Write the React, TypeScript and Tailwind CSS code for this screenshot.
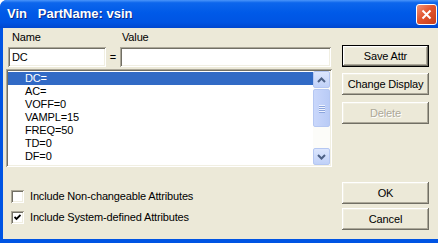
import React from 'react';

const items = ['DC=', 'AC=', 'VOFF=0', 'VAMPL=15', 'FREQ=50', 'TD=0', 'DF=0'];

const sunken =
  'shadow-[inset_1px_1px_0_#aca899,inset_-1px_-1px_0_#ffffff,inset_2px_2px_0_#716f64,inset_-2px_-2px_0_#f1efe2]';
const raised =
  'shadow-[inset_-1px_-1px_0_#716f64,inset_1px_1px_0_#ffffff,inset_-2px_-2px_0_#aca899,inset_2px_2px_0_#f1efe2]';

const Button = ({ label, isDefault, disabled }: { label: string; isDefault?: boolean; disabled?: boolean }) => (
  <div
    className={`h-[22px] w-[87px] flex items-center justify-center bg-[#ece9d8] ${
      isDefault ? 'border border-black' : ''
    }`}
  >
    <div className={`w-full h-full flex items-center justify-center ${raised}`}>
      <span
        className={
          disabled ? 'text-[#aca899] [text-shadow:1px_1px_0_#ffffff]' : 'text-black'
        }
      >
        {label}
      </span>
    </div>
  </div>
);

const Chevron = ({ up }: { up?: boolean }) => (
  <svg width="9" height="6" viewBox="0 0 9 6">
    <path
      d={up ? 'M1 5 L4.5 1.5 L8 5' : 'M1 1 L4.5 4.5 L8 1'}
      fill="none"
      stroke="#4d6185"
      strokeWidth="2"
    />
  </svg>
);

const ScrollBtn = ({ up }: { up?: boolean }) => (
  <div className="h-[17px] w-[17px] flex items-center justify-center rounded-[2px] border border-[#b5c7f2] bg-[linear-gradient(to_bottom,#dce6fd,#c0d1f8)]">
    <Chevron up={up} />
  </div>
);

const Checkbox = ({ checked }: { checked?: boolean }) => (
  <div className={`w-[13px] h-[13px] bg-white flex items-center justify-center ${sunken}`}>
    {checked && (
      <svg width="7" height="7" viewBox="0 0 7 7">
        <path d="M0.5 3 L2.5 5 L6.5 1" fill="none" stroke="#000" strokeWidth="1.8" />
      </svg>
    )}
  </div>
);

export default function App() {
  return (
    <div className="w-[438px] h-[243px] flex flex-col bg-[#0054e3] rounded-tl-[7px] overflow-hidden font-['Liberation_Sans',Arial,sans-serif] text-[11px] tracking-[-0.15px] text-black">
      {/* Title bar */}
      <div className="h-[28px] flex items-center justify-between bg-[linear-gradient(to_bottom,#4a95fa_0%,#0d66ec_10%,#005ae8_45%,#0054e3_80%,#0047cf_100%)]">
        <span className="ml-[7px] text-[13px] tracking-normal font-bold text-white whitespace-pre [text-shadow:1px_1px_0_#0a2a8a]">
          Vin   PartName: vsin
        </span>
        <div className="mr-[1px] w-[21px] h-[21px] rounded-[3px] border border-white bg-[linear-gradient(135deg,#f0947a,#e2552f_45%,#c63d1a)] flex items-center justify-center">
          <svg width="11" height="11" viewBox="0 0 11 11">
            <path d="M1.5 1.5 L9.5 9.5 M9.5 1.5 L1.5 9.5" stroke="#fff" strokeWidth="2" />
          </svg>
        </div>
      </div>

      {/* Body */}
      <div className="flex-1 ml-[3px] mb-[4px] bg-[#ece9d8] flex">
        <div className="w-[330px] flex flex-col">
          <div className="flex h-[14px] mt-[2px] leading-[14px]">
            <span className="ml-[9px] w-[110px]">Name</span>
            <span>Value</span>
          </div>
          <div className="flex items-center mt-[3px]">
            <div className={`ml-[5px] w-[98px] h-[20px] bg-white flex items-center pl-[4px] ${sunken}`}>DC</div>
            <span className="w-[14px] text-center">=</span>
            <div className={`w-[211px] h-[20px] bg-white ${sunken}`} />
          </div>
          <div className={`ml-[3px] mt-[2px] w-[326px] h-[98px] bg-white p-[2px] flex ${sunken}`}>
            <div className="flex-1 flex flex-col pt-[1px]">
              {items.map((it, i) => (
                <div
                  key={it}
                  className={`h-[13px] leading-[13px] pl-[17px] ${
                    i === 0 ? 'bg-[#316ac5] text-white' : ''
                  }`}
                >
                  {it}
                </div>
              ))}
            </div>
            <div className="w-[17px] flex flex-col bg-[#fcfcf9]">
              <ScrollBtn up />
              <div className="mt-[1px] h-[38px] rounded-[2px] border border-[#b5c7f2] bg-[linear-gradient(to_right,#c9d7fb,#b9cbf6)] flex flex-col items-center justify-center gap-[1px]">
                {[0, 1, 2, 3].map((k) => (
                  <div key={k} className="w-[6px] h-[1px] bg-[#eef3fe] shadow-[0_1px_0_#8ca5dd]" />
                ))}
              </div>
              <div className="flex-1" />
              <ScrollBtn />
            </div>
          </div>
          <div className="mt-[19px] flex flex-col gap-[1px]">
            <div className="h-[20px] flex items-center ml-[8px] gap-[6px]">
              <Checkbox />
              <span>Include Non-changeable Attributes</span>
            </div>
            <div className="h-[20px] flex items-center ml-[8px] gap-[6px]">
              <Checkbox checked />
              <span>Include System-defined Attributes</span>
            </div>
          </div>
        </div>

        <div className="ml-[9px] mt-[17px] flex flex-col">
          <Button label="Save Attr" isDefault />
          <div className="mt-[6px]">
            <Button label="Change Display" />
          </div>
          <div className="mt-[7px]">
            <Button label="Delete" disabled />
          </div>
          <div className="mt-[58px]">
            <Button label="OK" />
          </div>
          <div className="mt-[4px]">
            <Button label="Cancel" />
          </div>
        </div>
      </div>
    </div>
  );
}
